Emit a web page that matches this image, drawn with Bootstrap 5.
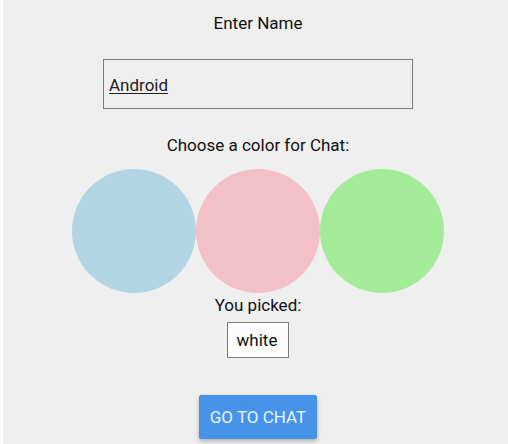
<!DOCTYPE html>
<html lang="en">
<head>
<meta charset="utf-8">
<meta name="viewport" content="width=device-width, initial-scale=1">
<title>Chat setup</title>
<link href="https://cdn.jsdelivr.net/npm/bootstrap@5.3.0/dist/css/bootstrap.min.css" rel="stylesheet">
<style>
  body { background: #fff; font-family: Roboto, sans-serif; font-size: 17px; line-height: 25px; color: #101010; }
  .screen { background: #efefef; margin-left: 3px; padding: 11px 0 4px 5px; }
  .name-field { max-width: 310px; height: 50px; margin-top: 23px; padding: 1px 5px 0; border: 1px solid #7c7c7c; border-radius: 0; font-size: 17px; color: #222; text-decoration: underline; text-decoration-thickness: 1px; text-underline-offset: 2px; text-decoration-skip-ink: none; }
  .name-field, .name-field:focus { background: #efefef; }
  .swatch { width: 124px; height: 124px; }
  .swatch-blue { background: #b2d4e3; }
  .swatch-pink { background: #f3bfc9; }
  .swatch-green { background: #a4eb99; }
  .swatch-row { margin-top: 11px; }
  .picked { background: #fcfcfc; border: 1px solid #7c7c7c; padding: 5px 11px 5px 9px; line-height: 24px; }
  .go-btn { --bs-btn-font-size: 17px; --bs-btn-color: #e8f5fb; --bs-btn-bg: #4793e9; --bs-btn-border-color: #4793e9; --bs-btn-hover-color: #fff; --bs-btn-hover-bg: #3a85da; --bs-btn-border-radius: 2px; --bs-btn-padding-x: 10px; --bs-btn-padding-y: 9px; margin-top: 37px; line-height: 24px; box-shadow: 0 2px 4px rgba(0,0,0,.28); }
</style>
</head>
<body>
<main class="screen min-vh-100 d-flex flex-column align-items-center">
  <label for="name">Enter Name</label>
  <input id="name" type="text" class="name-field form-control" value="Android" spellcheck="false">
  <div class="mt-4" id="color-label">Choose a color for Chat:</div>
  <div class="swatch-row d-flex justify-content-center" role="group" aria-labelledby="color-label">
    <button type="button" class="swatch swatch-blue rounded-circle border-0 p-0" aria-label="Light blue"></button>
    <button type="button" class="swatch swatch-pink rounded-circle border-0 p-0" aria-label="Pink"></button>
    <button type="button" class="swatch swatch-green rounded-circle border-0 p-0" aria-label="Light green"></button>
  </div>
  <div>You picked:</div>
  <output class="picked mt-1">white</output>
  <button type="button" class="btn go-btn">GO TO CHAT</button>
</main>
<script src="https://cdn.jsdelivr.net/npm/bootstrap@5.3.0/dist/js/bootstrap.bundle.min.js"></script>
</body>
</html>
